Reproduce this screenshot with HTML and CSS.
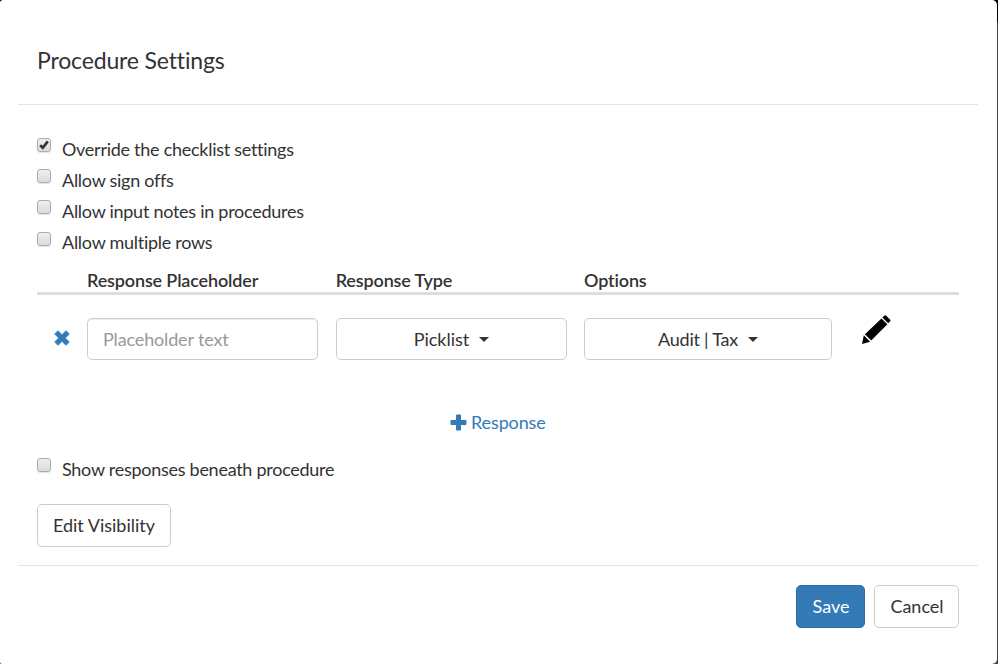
FILE: index.html
```html
<!DOCTYPE html>
<html lang="en">
<head>
<meta charset="utf-8">
<title>Procedure Settings</title>
<link rel="stylesheet" href="styles.css">
</head>
<body>
<main class="modal">
  <header class="modal-header"><h1 class="title">Procedure Settings</h1></header>
  <section class="modal-body">
    <div class="checks">
      <label class="check"><span class="box"><svg viewBox="0 0 14 14"><path d="M3.2 7.2 5.8 9.8 10.8 3.4" fill="none" stroke="#333" stroke-width="2.7"/></svg></span><span class="text">Override the checklist settings</span></label>
      <label class="check"><span class="box"></span><span class="text">Allow sign offs</span></label>
      <label class="check"><span class="box"></span><span class="text">Allow input notes in procedures</span></label>
      <label class="check low"><span class="box"></span><span class="text">Allow multiple rows</span></label>
    </div>
    <div class="grid head">
      <span></span><span>Response Placeholder</span><span>Response Type</span><span>Options</span>
    </div>
    <div class="grid fields">
      <svg class="remove" viewBox="0 0 16 16"><path d="M4 0.7 8 4.7 12 0.7 15.3 4 11.3 8 15.3 12 12 15.3 8 11.3 4 15.3 0.7 12 4.7 8 0.7 4Z" fill="#337ab7" stroke="#337ab7" stroke-width=".8" stroke-linejoin="round"/></svg>
      <input class="field" type="text" placeholder="Placeholder text">
      <button class="btn">Picklist<i class="caret"></i></button>
      <button class="btn options"><span>Audit | Tax</span><i class="caret"></i></button>
      <svg class="pencil" viewBox="0 0 30 30"><path d="M21.4 2.5 23.2.7Q24.2-.2 25.2.7L29 4.5Q29.9 5.5 29 6.5L27.2 8.3ZM20.5 3.4 26.4 9.3 10.2 25.6 3.9 19.3ZM2.8 20.3 9.2 26.7 1 29Z"/></svg>
    </div>
    <a class="add"><svg viewBox="0 0 17 17"><path d="M6.5 1h4v5.5H16v4h-5.5V16h-4v-5.5H1v-4h5.5Z" fill="#337ab7" stroke="#337ab7" stroke-linejoin="round"/></svg><span>Response</span></a>
    <label class="check beneath"><span class="box"></span><span class="text">Show responses beneath procedure</span></label>
    <button class="btn visibility">Edit Visibility</button>
  </section>
  <footer class="modal-footer">
    <button class="btn primary">Save</button>
    <button class="btn cancel">Cancel</button>
  </footer>
</main>
</body>
</html>
```
FILE: styles.css
```css
* { box-sizing: border-box; }
body { margin: 0; height: 664px; overflow: hidden; font: 18px/26px Lato, sans-serif; font-variant-ligatures: none; color: #333; background: linear-gradient(#000 22px, #444 22px); }
.modal { width: 997px; height: 664px; background: #fff; border-radius: 3px 5px 5px 2px; padding: 0 19px 0 18px; }
.modal-header { height: 105px; padding: 44px 19px 0; border-bottom: 1px solid #e5e5e5; }
.title { margin: 0; font-size: 23px; line-height: 33px; font-weight: 400; letter-spacing: -.15px; }
.modal-body { height: 461px; padding: 32px 19px 0; border-bottom: 1px solid #e5e5e5; }
.check { display: flex; height: 31px; gap: 11px; align-items: flex-start; }
.text { margin-top: -1px; letter-spacing: -.27px; }
.box { width: 14px; height: 14px; margin-top: 1px; border: 1px solid #adadad; border-radius: 3px; background: linear-gradient(#eee, #dcdcdc); box-shadow: 0 1px 1px #e4e4e4; }
.box svg { display: block; width: 14px; height: 14px; margin: -1px; }
.low .box { margin-top: 2px; }
.grid { display: grid; }
.head { height: 34px; border-bottom: 3px solid #ddd; padding-top: 6px; font-weight: 600; letter-spacing: -.15px; grid-template-columns: 50px 248.7px 248.3px auto; }
.fields { margin-top: 23px; height: 42px; grid-template-columns: 33px 232px 231px 249px 30px; column-gap: 17px; }
.remove { width: 16px; height: 16px; margin: 12px 0 0 17px; }
.field { width: 231px; height: 42px; padding: 0 15px 1px; font: inherit; letter-spacing: -.15px; border: 1px solid #ccc; border-radius: 5px; box-shadow: inset 0 1px 1px rgba(0,0,0,.075); color: #555; }
.field::placeholder { color: #999; opacity: 1; }
.btn { display: flex; align-items: center; justify-content: center; gap: 10px; padding: 0; border: 1px solid #ccc; border-radius: 5px; background: #fff; color: #333; font: inherit; font-variant-ligatures: none; }
.options { width: 248px; letter-spacing: -.25px; }
.caret { border: 5px solid transparent; border-top-color: #333; border-bottom: 0; }
.pencil { width: 30px; height: 30px; margin: -3px 0 0 11px; }
.add { display: flex; width: 96px; height: 26px; margin: 50px 0 0 413px; gap: 4px; color: #337ab7; letter-spacing: -.12px; }
.add svg { width: 17px; height: 17px; flex: none; margin-top: 4px; }
.add span { margin-top: -1px; }
.beneath { margin-top: 21px; }
.visibility { width: 134px; height: 43px; margin-top: 16px; padding-bottom: 2px; }
.modal-footer { display: flex; justify-content: flex-end; gap: 9px; padding: 19px 19px 0; }
.modal-footer .btn { height: 43px; width: 85px; padding: 0 0 2px 1px; }
.modal-footer .primary { width: 69px; background: #337ab7; border-color: #2e6da4; color: #fff; }
```
